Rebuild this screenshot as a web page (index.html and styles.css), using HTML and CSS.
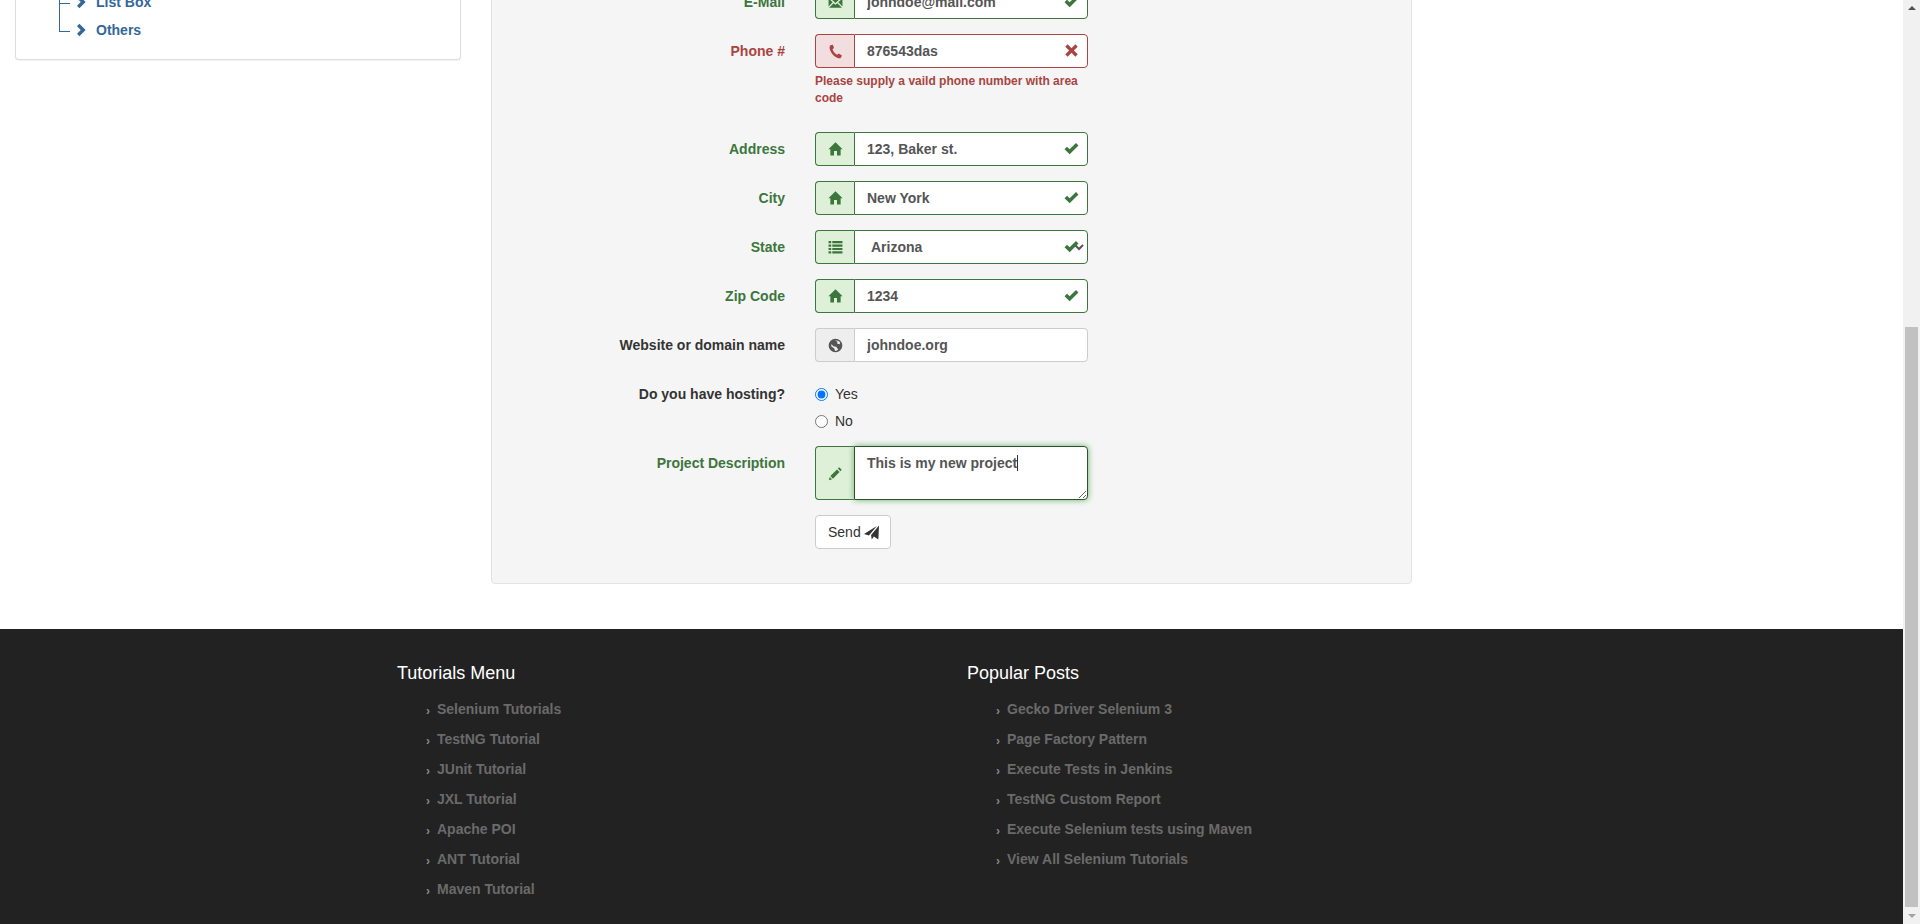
FILE: index.html
```html
<!DOCTYPE html>
<html lang="en">
<head>
    <meta charset="UTF-8">
    <meta name="viewport" content="width=device-width, initial-scale=1.0">
    <title>Contact Form</title>
    <link rel="stylesheet" href="styles.css">
</head>
<body>
    <svg class="sprite" xmlns="http://www.w3.org/2000/svg">
        <symbol id="i-ok" viewBox="0 0 14 14"><path d="M0.5 7.6 2.8 5.3 5.3 7.8 11.2 1.9 13.5 4.2 5.3 12.4Z"/></symbol>
        <symbol id="i-remove" viewBox="0 0 14 14"><path d="M3.4 1.2 7 4.8 10.6 1.2 12.8 3.4 9.2 7 12.8 10.6 10.6 12.8 7 9.2 3.4 12.8 1.2 10.6 4.8 7 1.2 3.4Z"/></symbol>
        <symbol id="i-home" viewBox="0 0 14 14"><path d="M7 0.3 13.6 6.7H11.8V12.7H8.4V8.5H5.6V12.7H2.2V6.7H0.4Z"/></symbol>
        <symbol id="i-list" viewBox="0 0 14 14"><path d="M0.5 1H3V3H0.5ZM4 1H13.5V3H4ZM0.5 4.2H3V6.2H0.5ZM4 4.2H13.5V6.2H4ZM0.5 7.4H3V9.4H0.5ZM4 7.4H13.5V9.4H4ZM0.5 10.6H3V12.6H0.5ZM4 10.6H13.5V12.6H4Z"/></symbol>
        <symbol id="i-phone" viewBox="0 0 14 14"><path d="M2.2 1.2 4.6 0.8 5.6 3.8 4.2 4.8C4.6 6.6 6.4 9 8.6 10L10 8.8 13 10.8 12 12.8C11.4 13.4 10.2 13.4 9 13 5.4 11.6 2.4 8 1.6 4.4 1.4 3 1.6 1.8 2.2 1.2Z"/></symbol>
        <symbol id="i-envelope" viewBox="0 0 14 14"><path d="M1 2H13L7 7.5ZM0.5 3.2 4.4 6.8 0.5 10.8ZM13.5 3.2 9.6 6.8 13.5 10.8ZM1 12 5.2 7.6 7 9.2 8.8 7.6 13 12Z"/></symbol>
        <symbol id="i-globe" viewBox="0 0 14 14"><path fill-rule="evenodd" d="M7 0.6A6.4 6.4 0 1 1 7 13.4 6.4 6.4 0 0 1 7 0.6ZM6.6 2.4 8.8 3.4 8.6 5.4 10.8 5.8 11.4 4.2C10.4 2.8 8.6 2 6.6 2.4ZM3.2 5.6 3 7.6 5.8 9.8 6.6 12C8 12.2 9 11.6 9.4 10.6L7.6 8.2 5 7.6Z"/></symbol>
        <symbol id="i-pencil" viewBox="0 0 14 14"><path d="M10.4 1.2 12.8 3.6 11.6 4.8 9.2 2.4ZM8.4 3.2 10.8 5.6 4.6 11.8 2.2 9.4ZM1.6 10.2 3.8 12.4 0.8 13.2Z"/></symbol>
        <symbol id="i-send" viewBox="0 0 14 14"><path d="M14 0.5 13.4 13.5 9.2 10.8 7.2 13.5 6.6 9.4ZM12 1 0 8.5 4.6 9.8Z"/></symbol>
        <symbol id="i-chevron" viewBox="0 0 14 14"><path d="M4.4 0.8 10.6 7 4.4 13.2 2 10.8 5.8 7 2 3.2Z"/></symbol>
    </svg>

    <div class="page">
        <div class="content">
            <aside class="sidebar">
                <ul class="tree">
                    <li><svg class="tree-icon"><use href="#i-chevron"/></svg><a href="#">List Box</a></li>
                    <li><svg class="tree-icon"><use href="#i-chevron"/></svg><a href="#">Others</a></li>
                </ul>
            </aside>

            <form class="well">
                <div class="row has-success">
                    <label class="row-label">E-Mail</label>
                    <div class="input-group">
                        <span class="addon"><svg class="icon"><use href="#i-envelope"/></svg></span>
                        <input class="field" type="text" value="johndoe@mail.com">
                        <svg class="feedback"><use href="#i-ok"/></svg>
                    </div>
                </div>
                <div class="row has-error">
                    <label class="row-label">Phone #</label>
                    <div class="row-body">
                        <div class="input-group">
                            <span class="addon"><svg class="icon"><use href="#i-phone"/></svg></span>
                            <input class="field" type="text" value="876543das">
                            <svg class="feedback"><use href="#i-remove"/></svg>
                        </div>
                        <p class="help">Please supply a vaild phone number with area code</p>
                    </div>
                </div>
                <div class="row has-success">
                    <label class="row-label">Address</label>
                    <div class="input-group">
                        <span class="addon"><svg class="icon"><use href="#i-home"/></svg></span>
                        <input class="field" type="text" value="123, Baker st.">
                        <svg class="feedback"><use href="#i-ok"/></svg>
                    </div>
                </div>
                <div class="row has-success">
                    <label class="row-label">City</label>
                    <div class="input-group">
                        <span class="addon"><svg class="icon"><use href="#i-home"/></svg></span>
                        <input class="field" type="text" value="New York">
                        <svg class="feedback"><use href="#i-ok"/></svg>
                    </div>
                </div>
                <div class="row has-success">
                    <label class="row-label">State</label>
                    <div class="input-group">
                        <span class="addon"><svg class="icon"><use href="#i-list"/></svg></span>
                        <select class="field">
                            <option>Arizona</option>
                        </select>
                        <svg class="feedback"><use href="#i-ok"/></svg>
                    </div>
                </div>
                <div class="row has-success">
                    <label class="row-label">Zip Code</label>
                    <div class="input-group">
                        <span class="addon"><svg class="icon"><use href="#i-home"/></svg></span>
                        <input class="field" type="text" value="1234">
                        <svg class="feedback"><use href="#i-ok"/></svg>
                    </div>
                </div>
                <div class="row">
                    <label class="row-label">Website or domain name</label>
                    <div class="input-group">
                        <span class="addon"><svg class="icon"><use href="#i-globe"/></svg></span>
                        <input class="field" type="text" value="johndoe.org">
                    </div>
                </div>
                <div class="row">
                    <label class="row-label">Do you have hosting?</label>
                    <div class="radios">
                        <label class="radio"><input type="radio" name="hosting" checked> Yes</label>
                        <label class="radio"><input type="radio" name="hosting"> No</label>
                    </div>
                </div>
                <div class="row has-success">
                    <label class="row-label">Project Description</label>
                    <div class="input-group">
                        <span class="addon"><svg class="icon"><use href="#i-pencil"/></svg></span>
                        <div class="field area">This is my new project<span class="caret"></span></div>
                    </div>
                </div>
                <div class="row">
                    <span class="row-label"></span>
                    <button class="send" type="button">Send <svg class="icon"><use href="#i-send"/></svg></button>
                </div>
            </form>
        </div>

        <footer class="footer">
            <div class="footer-col">
                <h4>Tutorials Menu</h4>
                <ul>
                    <li><a href="#">Selenium Tutorials</a></li>
                    <li><a href="#">TestNG Tutorial</a></li>
                    <li><a href="#">JUnit Tutorial</a></li>
                    <li><a href="#">JXL Tutorial</a></li>
                    <li><a href="#">Apache POI</a></li>
                    <li><a href="#">ANT Tutorial</a></li>
                    <li><a href="#">Maven Tutorial</a></li>
                </ul>
            </div>
            <div class="footer-col">
                <h4>Popular Posts</h4>
                <ul>
                    <li><a href="#">Gecko Driver Selenium 3</a></li>
                    <li><a href="#">Page Factory Pattern</a></li>
                    <li><a href="#">Execute Tests in Jenkins</a></li>
                    <li><a href="#">TestNG Custom Report</a></li>
                    <li><a href="#">Execute Selenium tests using Maven</a></li>
                    <li><a href="#">View All Selenium Tutorials</a></li>
                </ul>
            </div>
        </footer>
    </div>

    <div class="scrollbar">
        <span class="arrow-up"></span>
        <span class="thumb"></span>
        <span class="arrow-down"></span>
    </div>
</body>
</html>
```

FILE: styles.css
```css
* { box-sizing: border-box; }
html, body { height: 924px; overflow: hidden; }
body { margin: 0; display: flex; background: #fff; color: #333; font-family: "Liberation Sans", Arial, sans-serif; font-size: 14px; line-height: 20px; }
a { text-decoration: none; }
ul { list-style: none; margin: 0; padding: 0; }
.sprite { display: none; }

.page { flex: 1; min-width: 0; display: flex; flex-direction: column; }
.content { display: flex; align-items: flex-start; gap: 30px; padding-left: 15px; margin-top: -16px; }

/* sidebar tree, scrolled mostly out of view */
.sidebar { width: 446px; height: 76px; padding: 4px 0 0 43px; background: #fff; border: 1px solid #ddd; border-top: 0; border-radius: 0 0 4px 4px; box-shadow: 0 1px 1px rgba(0, 0, 0, .05); }
.tree li { position: relative; display: flex; align-items: center; height: 28px; padding-left: 16px; font-weight: bold; }
.tree li::before { content: ""; position: absolute; left: 0; top: -14px; width: 10px; height: 29px; border-left: 1px solid #336699; border-bottom: 1px solid #336699; }
.tree a { color: #336699; }
.tree-icon { width: 14px; height: 14px; margin-right: 7px; fill: #336699; }

.well { width: 921px; padding: 0 0 34px; background: #f5f5f5; border: 1px solid #e3e3e3; border-radius: 4px; }
.row { display: flex; gap: 30px; margin-bottom: 15px; }
.row:last-child { margin-bottom: 0; }
.row-label { flex: none; width: 293px; padding-top: 7px; font-weight: bold; text-align: right; }
.row-body { width: 273px; }

.input-group { position: relative; display: flex; width: 273px; }
.addon { flex: none; display: flex; align-items: center; justify-content: center; width: 39px; background: #eee; color: #555; border: 1px solid #ccc; border-right: 0; border-radius: 4px 0 0 4px; }
.icon { width: 15px; height: 15px; fill: currentColor; }
.field { flex: 1; min-width: 0; height: 34px; padding: 6px 12px; background: #fff; color: #555; border: 1px solid #ccc; border-radius: 0 4px 4px 0; font: bold 14px/20px "Liberation Sans", Arial, sans-serif; outline: none; }
.area { height: 54px; overflow: auto; resize: both; border-color: #2b542c; box-shadow: 0 0 6px #67b168; }
.caret { display: inline-block; width: 1px; height: 16px; background: #333; vertical-align: -3px; }
.feedback { position: absolute; right: 9px; top: 9px; width: 15px; height: 15px; }

.has-success .row-label { color: #3c763d; }
.has-success .addon { background: #dff0d8; color: #3c763d; border-color: #3c763d; }
.has-success .field { border-color: #3c763d; }
.has-success .area { border-color: #2b542c; }
.has-success .feedback { fill: #3c763d; }
.has-error .row-label { color: #a94442; }
.has-error .addon { background: #f2dede; color: #a94442; border-color: #a94442; }
.has-error .field { border-color: #a94442; }
.has-error .feedback { fill: #a94442; }
.help { margin: 5px 0 10px; color: #a94442; font-size: 12px; font-weight: bold; line-height: 17px; }

.radios { display: flex; flex-direction: column; gap: 7px; padding-top: 7px; }
.radio { display: flex; align-items: center; height: 20px; }
.radio input { margin: 0 7px 0 0; }

.send { display: flex; align-items: center; gap: 3px; width: 76px; height: 34px; padding: 6px 10px 6px 12px; background: #fff; color: #333; border: 1px solid #ccc; border-radius: 4px; font: 14px/20px "Liberation Sans", Arial, sans-serif; cursor: pointer; }

.footer { flex: 1; display: flex; margin-top: 45px; padding: 34px 0 0 397px; background: #222; }
.footer-col { width: 570px; }
.footer h4 { margin: 0 0 11px; color: #fff; font-size: 18px; font-weight: normal; line-height: 20px; }
.footer ul { padding-left: 29px; }
.footer li { height: 30px; line-height: 30px; }
.footer a { color: #6a6a6a; font-weight: bold; }
.footer a::before { content: "\203A"; display: inline-block; width: 11px; color: #8a8a8a; font-size: 12px; vertical-align: -1px; }

/* scrollbar drawn by hand, the page itself does not scroll here */
.scrollbar { flex: none; position: relative; width: 17px; background: #f1f1f1; }
.thumb { display: block; width: 13px; height: 580px; margin: 327px 0 0 2px; background: #c1c1c1; }
.arrow-up, .arrow-down { position: absolute; left: 5px; width: 0; height: 0; border-left: 4px solid transparent; border-right: 4px solid transparent; }
.arrow-up { top: 6px; border-bottom: 4px solid #505050; }
.arrow-down { bottom: 6px; border-top: 4px solid #a3a3a3; }
```
